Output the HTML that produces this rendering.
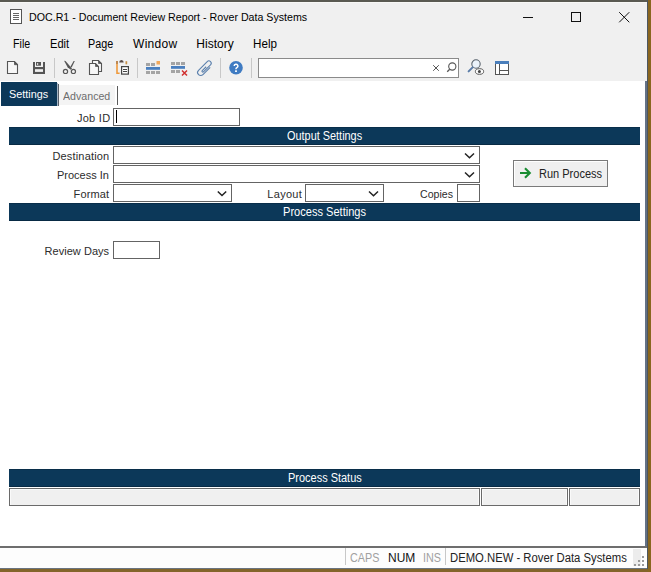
<!DOCTYPE html>
<html><head><meta charset="utf-8">
<style>
*{box-sizing:border-box;margin:0;padding:0}
html,body{width:651px;height:572px;overflow:hidden;background:#f0f0f0;font-family:"Liberation Sans",sans-serif;color:#000;position:relative}
div,svg{position:absolute}
.tx{white-space:nowrap}
.nv{background:#0c3859;height:18px;left:9px;width:631px;border-top:1px solid #092e4a;border-bottom:1px solid #082a44}
.inp{background:#fff;border:1px solid #646464;height:18px}
.sb{background:#f0f0f0;border:1px solid #6a6a6a;height:18px;top:488px;box-shadow:inset 1px 1px 0 #fafafa,inset -1px 0 0 #fafafa}
.sep{width:1px;background:#c8c8c8;top:58px;height:20px}
</style></head><body>
<!-- desktop edges -->
<div style="left:0;top:0;width:651px;height:2px;background:#5a5a52"></div>
<div style="left:0;top:2px;width:647px;height:1px;background:#f8f8f6"></div>
<div style="left:647px;top:0;width:1px;height:572px;background:#4c5660"></div>
<div style="left:648px;top:0;width:3px;height:572px;background:#8a661f"></div>
<div style="left:0;top:569px;width:648px;height:3px;background:#83642a"></div>
<!-- title icon -->
<svg style="left:0;top:0" width="40" height="30">
  <rect x="10.5" y="9.5" width="11" height="14" fill="#fff" stroke="#555" stroke-width="1"/>
  <path d="M13 13.5h6M13 15.5h6M13 17.5h6M13 19.5h6" stroke="#666" stroke-width="1"/>
</svg>
<!-- window controls -->
<div style="left:523px;top:17px;width:10px;height:1px;background:#111"></div>
<div style="left:571px;top:12px;width:10px;height:10px;border:1px solid #111"></div>
<svg style="left:615px;top:8px" width="18" height="18">
  <path d="M4.2 4.2L14.3 14.3M14.3 4.2L4.2 14.3" stroke="#111" stroke-width="1"/>
</svg>

<!-- toolbar icons -->
<svg style="left:0;top:54px" width="260" height="26">
  <!-- new -->
  <path d="M7.5 61.5h7l3 3v9h-10z" transform="translate(0,-54)" fill="#f7f7f7" stroke="#555" stroke-width="1.1"/>
  <path d="M14.5 7.5v3.2h3.2z" fill="#555" stroke="#555" stroke-width="0.8"/>
  <!-- save -->
  <rect x="33" y="8" width="12" height="12" fill="#555"/>
  <rect x="35" y="8" width="8" height="5" fill="#f0f0f0"/>
  <rect x="36" y="8" width="5" height="3.7" fill="#555"/>
  <rect x="37" y="9.2" width="1.2" height="1.6" fill="#eee"/>
  <rect x="35" y="15.2" width="8" height="2.7" fill="#f0f0f0"/>
  <!-- scissors -->
  <path d="M64.1 6.8L65.5 6.9L72 14.6L70.7 15.8L67.6 13.3Z" fill="#555"/>
  <path d="M74.8 6.9L73.6 6.9L70.4 12.8L71.7 13.5Z" fill="#555"/>
  <circle cx="65.5" cy="17.4" r="2.1" fill="none" stroke="#585858" stroke-width="1.2"/>
  <circle cx="73.4" cy="17.4" r="2.1" fill="none" stroke="#585858" stroke-width="1.2"/>
  <!-- copy -->
  <path d="M92.5 6.5h6l3 3v8h-9z" fill="#f7f7f7" stroke="#555" stroke-width="1.1"/>
  <path d="M98.5 6.5v3h3z" fill="#555" stroke="#555" stroke-width="0.7"/>
  <path d="M89.5 9.5h6l3 3v8h-9z" fill="#f7f7f7" stroke="#555" stroke-width="1.1"/>
  <path d="M95.5 9.5v3h3z" fill="#555" stroke="#555" stroke-width="0.7"/>
  <!-- paste -->
  <path d="M117 7v12.2h2.6" fill="none" stroke="#ef9a3c" stroke-width="1.6"/>
  <path d="M117 7v3" fill="none" stroke="#b08050" stroke-width="1.6"/>
  <path d="M119.2 8.6q0-2.6 2.25-2.6t2.25 2.6z" fill="#5a4a44"/>
  <rect x="125.5" y="7.2" width="1.7" height="3.1" fill="#c89048"/>
  <rect x="121.6" y="12.6" width="6.8" height="7.5" fill="#fff" stroke="#444" stroke-width="1.2"/>
  <path d="M123 15.5h4M123 17.5h4" stroke="#444" stroke-width="1"/>
  <!-- insert rows -->
  <rect x="146" y="9" width="4" height="3" fill="#a4a4a4"/>
  <rect x="151" y="9" width="4" height="3" fill="#a4a4a4"/>
  <rect x="156.5" y="7" width="3.5" height="3.5" fill="#f2a85a"/>
  <rect x="146" y="13" width="14" height="2.8" fill="#4a7fbf"/>
  <rect x="146" y="17" width="4" height="3" fill="#a4a4a4"/>
  <rect x="151" y="17" width="4" height="3" fill="#a4a4a4"/>
  <rect x="156" y="17" width="4" height="3" fill="#a4a4a4"/>
  <!-- delete rows -->
  <rect x="171" y="8" width="4" height="3" fill="#a4a4a4"/>
  <rect x="176" y="8" width="4" height="3" fill="#a4a4a4"/>
  <rect x="181" y="8" width="4" height="3" fill="#a4a4a4"/>
  <rect x="171" y="12" width="14" height="2.8" fill="#4a7fbf"/>
  <rect x="171" y="16" width="4" height="3" fill="#a4a4a4"/>
  <rect x="176" y="16" width="4" height="3" fill="#a4a4a4"/>
  <path d="M182 16.5l5 5M187 16.5l-5 5" stroke="#d03030" stroke-width="1.5"/>
  <!-- clip -->
  <g transform="translate(198.4,20.8) rotate(-45)">
    <path d="M13.6 3.1H3.3A3.1 3.1 0 0 1 3.3 -3.1H15.6A2.3 2.3 0 0 1 15.6 1.5H5.6A0.85 0.85 0 0 1 5.6 -0.2H11.2" fill="none" stroke="#5b80ad" stroke-width="1.1"/>
  </g>
  <!-- help -->
  <circle cx="236" cy="13.7" r="6.8" fill="#3f7bc2"/>
  <path d="M234.2 12a1.85 1.85 0 1 1 2.7 1.65c-.6.33-.9.65-.9 1.3v.35" fill="none" stroke="#fff" stroke-width="1.5"/>
  <rect x="235.1" y="16.3" width="1.8" height="1.7" fill="#fff"/>
</svg>
<div class="sep" style="left:54px"></div>
<div class="sep" style="left:137px"></div>
<div class="sep" style="left:220px"></div>
<div class="sep" style="left:251px"></div>
<!-- search box -->
<div style="left:258px;top:58px;width:201px;height:20px;background:#fff;border:1px solid #8a8a8a"></div>
<svg style="left:420px;top:54px" width="100" height="26">
  <path d="M13.2 11.2l5.6 5.6M18.8 11.2l-5.6 5.6" stroke="#555" stroke-width="1"/>
  <circle cx="32.3" cy="12.5" r="3.6" fill="none" stroke="#555" stroke-width="1.1"/>
  <path d="M29.7 15.2l-2.5 2.6" stroke="#555" stroke-width="1.3"/>
  <!-- magnifier eye -->
  <circle cx="56" cy="10" r="4.2" fill="#eaf2fa" stroke="#56606a" stroke-width="1.05"/>
  <path d="M52.6 13.4l-4 4" stroke="#5a7ca8" stroke-width="2" stroke-linecap="round"/>
  <ellipse cx="59.5" cy="17.5" rx="4.1" ry="2.8" fill="#fff" stroke="#555" stroke-width="1"/>
  <circle cx="59.4" cy="17.4" r="1.5" fill="#444"/>
  <!-- layout -->
  <rect x="75.5" y="7.5" width="13" height="13" fill="#fff" stroke="#555" stroke-width="1"/>
  <rect x="75" y="7" width="14" height="3" fill="#4a7ebb"/>
  <path d="M79.5 10v10M79.5 16.5h9" stroke="#555" stroke-width="1"/>
</svg>

<!-- content -->
<div style="left:0;top:81px;width:645px;height:465px;background:#fff"></div>
<div style="left:645px;top:81px;width:2px;height:467px;background:#647286"></div>
<div style="left:0;top:546px;width:647px;height:2px;background:#6e6e6e"></div>
<!-- status bar -->
<div style="left:0;top:548px;width:647px;height:20px;background:#fdfdfd"></div>
<div style="left:0;top:568px;width:647px;height:1px;background:#6a7480"></div>
<div style="left:345px;top:548px;width:1px;height:17px;background:#c8c8c8"></div>
<div style="left:445px;top:548px;width:1px;height:17px;background:#c8c8c8"></div>
<div style="left:633px;top:549px;width:8px;height:17px;background:#ececec"></div>
<div style="left:634px;top:564px;width:2px;height:2px;background:#9a9a9a"></div>
<div style="left:638px;top:564px;width:2px;height:2px;background:#9a9a9a"></div>
<div style="left:642px;top:564px;width:2px;height:2px;background:#9a9a9a"></div>
<div style="left:638px;top:560px;width:2px;height:2px;background:#9a9a9a"></div>
<div style="left:642px;top:560px;width:2px;height:2px;background:#9a9a9a"></div>
<div style="left:642px;top:556px;width:2px;height:2px;background:#9a9a9a"></div>

<!-- tabs -->
<div style="left:1px;top:82px;width:56px;height:24px;background:#0c3859"></div>
<div style="left:57px;top:83px;width:1px;height:23px;background:#a6b6c6"></div>
<div style="left:58px;top:84px;width:1px;height:22px;background:#58606a"></div>
<div style="left:59px;top:85px;width:56px;height:20px;background:#f4f4f4"></div>
<div style="left:116.5px;top:86px;width:1.5px;height:19px;background:#5a5a5a"></div>

<!-- form -->
<div class="inp" style="left:113px;top:108px;width:127px"></div>
<div style="left:116px;top:110px;width:1px;height:13px;background:#000"></div>
<div class="nv" style="top:127px"></div>
<div class="inp" style="left:113px;top:146px;width:367px"></div>
<div class="inp" style="left:113px;top:165px;width:367px"></div>
<div class="inp" style="left:113px;top:184px;width:119px"></div>
<div class="inp" style="left:305px;top:184px;width:79px"></div>
<div class="inp" style="left:457px;top:184px;width:23px"></div>
<svg style="left:0;top:140px" width="480" height="70">
  <path d="M465 13.5l4.5 4.2l4.5-4.2" fill="none" stroke="#222" stroke-width="1.5"/>
  <path d="M465 32.5l4.5 4.2l4.5-4.2" fill="none" stroke="#222" stroke-width="1.5"/>
  <path d="M217.8 51.5l4.2 4l4.2-4" fill="none" stroke="#222" stroke-width="1.5"/>
  <path d="M369 51.5l4.5 4.2l4.5-4.2" fill="none" stroke="#222" stroke-width="1.5"/>
</svg>
<!-- run process button -->
<div style="left:513px;top:160px;width:95px;height:27px;background:#f0f0f0;border:1px solid #7a7a7a;box-shadow:inset 1px 1px 0 #fff"></div>
<svg style="left:515px;top:164px" width="20" height="18">
  <path d="M5 9h9.5M10 4.2L14.8 9L10 13.8" fill="none" stroke="#1a8d32" stroke-width="2.1" stroke-linejoin="miter"/>
</svg>
<div class="nv" style="top:203px"></div>
<div class="inp" style="left:113px;top:241px;width:47px"></div>

<div class="nv" style="top:469px"></div>
<div class="sb" style="left:9px;width:471px"></div>
<div class="sb" style="left:481px;width:87px"></div>
<div class="sb" style="left:569px;width:71px"></div>

<div class="tx" style="left:28.80px;top:12.00px;font-size:11px;line-height:11px;color:#000;transform:scaleX(0.9683);transform-origin:0 0">DOC.R1 - Document Review Report - Rover Data Systems</div>
<div class="tx" style="left:12.50px;top:38.00px;font-size:12px;line-height:12px;color:#000;transform:scaleX(0.8903);transform-origin:0 0">File</div>
<div class="tx" style="left:49.70px;top:38.00px;font-size:12px;line-height:12px;color:#000;transform:scaleX(0.9249);transform-origin:0 0">Edit</div>
<div class="tx" style="left:88.40px;top:38.00px;font-size:12px;line-height:12px;color:#000;transform:scaleX(0.8974);transform-origin:0 0">Page</div>
<div class="tx" style="left:133.10px;top:38.00px;font-size:12px;line-height:12px;letter-spacing:0.256px;color:#000">Window</div>
<div class="tx" style="left:196.30px;top:38.00px;font-size:12px;line-height:12px;letter-spacing:0.030px;color:#000">History</div>
<div class="tx" style="left:253.30px;top:38.00px;font-size:12px;line-height:12px;color:#000;transform:scaleX(0.9709);transform-origin:0 0">Help</div>
<div class="tx" style="left:8.90px;top:89.00px;font-size:11.5px;line-height:11.5px;color:#fff;transform:scaleX(0.9418);transform-origin:0 0">Settings</div>
<div class="tx" style="left:62.90px;top:91.00px;font-size:11.5px;line-height:11.5px;color:#6d6d6d;transform:scaleX(0.9243);transform-origin:0 0">Advanced</div>
<div class="tx" style="left:76.90px;top:113.00px;font-size:11px;line-height:11px;letter-spacing:0.282px;color:#2c2c2c">Job ID</div>
<div class="tx" style="left:287.20px;top:130.00px;font-size:12px;line-height:12px;color:#fff;transform:scaleX(0.9083);transform-origin:0 0">Output Settings</div>
<div class="tx" style="left:52.40px;top:151.00px;font-size:11px;line-height:11px;letter-spacing:0.180px;color:#2c2c2c">Destination</div>
<div class="tx" style="left:57.30px;top:170.00px;font-size:11px;line-height:11px;color:#2c2c2c;transform:scaleX(0.9996);transform-origin:0 0">Process In</div>
<div class="tx" style="left:73.60px;top:189.00px;font-size:11px;line-height:11px;letter-spacing:0.106px;color:#2c2c2c">Format</div>
<div class="tx" style="left:267.30px;top:189.00px;font-size:11px;line-height:11px;letter-spacing:0.300px;color:#2c2c2c">Layout</div>
<div class="tx" style="left:419.90px;top:189.00px;font-size:11px;line-height:11px;color:#2c2c2c;transform:scaleX(0.9617);transform-origin:0 0">Copies</div>
<div class="tx" style="left:538.60px;top:168.00px;font-size:12px;line-height:12px;color:#222;transform:scaleX(0.9178);transform-origin:0 0">Run Process</div>
<div class="tx" style="left:283.00px;top:206.00px;font-size:12px;line-height:12px;color:#fff;transform:scaleX(0.9222);transform-origin:0 0">Process Settings</div>
<div class="tx" style="left:44.60px;top:246.00px;font-size:11px;line-height:11px;letter-spacing:0.027px;color:#2c2c2c">Review Days</div>
<div class="tx" style="left:288.20px;top:472.00px;font-size:12px;line-height:12px;color:#fff;transform:scaleX(0.9139);transform-origin:0 0">Process Status</div>
<div class="tx" style="left:349.70px;top:552.00px;font-size:12px;line-height:12px;color:#a0a0a0;transform:scaleX(0.8977);transform-origin:0 0">CAPS</div>
<div class="tx" style="left:388.30px;top:552.00px;font-size:12px;line-height:12px;color:#111;transform:scaleX(0.9978);transform-origin:0 0">NUM</div>
<div class="tx" style="left:423.00px;top:552.00px;font-size:12px;line-height:12px;color:#a0a0a0;transform:scaleX(0.8982);transform-origin:0 0">INS</div>
<div class="tx" style="left:449.60px;top:552.00px;font-size:12px;line-height:12px;color:#222;transform:scaleX(0.9402);transform-origin:0 0">DEMO.NEW - Rover Data Systems</div>
</body></html>
